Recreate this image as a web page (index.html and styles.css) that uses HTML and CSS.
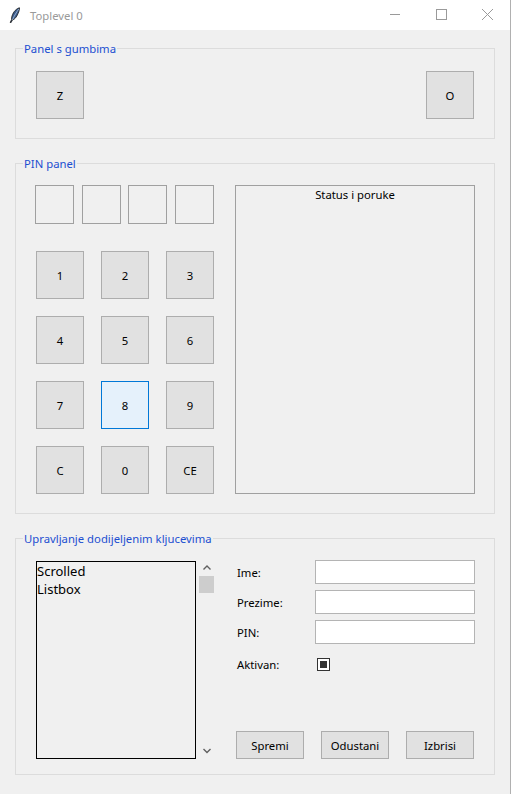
FILE: index.html
```html
<!DOCTYPE html>
<html>
<head>
<meta charset="utf-8">
<link rel="stylesheet" href="styles.css">
</head>
<body>
<div class="window">
  <div class="titlebar">
    <svg class="app-icon" width="12" height="16" viewBox="0 0 12 16">
      <path d="M10.5 0.8 C7.5 1.5 4.5 4.5 3 9 C2.6 10.4 2.4 11.6 2.6 12.6 L1.2 15.4 L2 15.7 L3.4 13 C5.6 12.6 7.6 10 9 6.6 C9.9 4.5 10.6 2.6 10.5 0.8 Z" fill="#3a5a8a" stroke="#1a1a1a" stroke-width="0.8"/>
      <path d="M9.8 2 C7.6 5 5.4 8.6 3.4 13" stroke="#cfe0f5" stroke-width="0.6" fill="none"/>
    </svg>
    <span class="title">Toplevel 0</span>
    <div class="controls">
      <svg class="ctl" width="46" height="30" viewBox="0 0 46 30"><path d="M18 14.5 H28" stroke="#9a9a9a" stroke-width="1"/></svg>
      <svg class="ctl" width="46" height="30" viewBox="0 0 46 30"><rect x="18.5" y="9.5" width="10" height="10" fill="none" stroke="#9a9a9a" stroke-width="1"/></svg>
      <svg class="ctl" width="46" height="30" viewBox="0 0 46 30"><path d="M18 9 L29 20 M29 9 L18 20" stroke="#9a9a9a" stroke-width="1"/></svg>
    </div>
  </div>

  <div class="group g1">
    <div class="legend">Panel s gumbima</div>
    <div class="g1-row">
      <button class="key">Z</button>
      <button class="key">O</button>
    </div>
  </div>

  <div class="group g2">
    <div class="legend">PIN panel</div>
    <div class="g2-body">
      <div class="pin-col">
        <div class="pin-entries">
          <div class="pin-entry"></div>
          <div class="pin-entry"></div>
          <div class="pin-entry"></div>
          <div class="pin-entry"></div>
        </div>
        <div class="keypad">
          <button class="key">1</button>
          <button class="key">2</button>
          <button class="key">3</button>
          <button class="key">4</button>
          <button class="key">5</button>
          <button class="key">6</button>
          <button class="key">7</button>
          <button class="key active">8</button>
          <button class="key">9</button>
          <button class="key">C</button>
          <button class="key">0</button>
          <button class="key">CE</button>
        </div>
      </div>
      <div class="status">Status i poruke</div>
    </div>
  </div>

  <div class="group g3">
    <div class="legend">Upravljanje dodijeljenim kljucevima</div>
    <div class="g3-body">
      <div class="listbox">
        <div class="item">Scrolled</div>
        <div class="item">Listbox</div>
      </div>
      <div class="scrollbar">
        <svg width="18" height="12" viewBox="0 0 18 12"><path d="M5.5 7.5 L9 4 L12.5 7.5" fill="none" stroke="#606060" stroke-width="1.4"/></svg>
        <div class="thumb"></div>
        <div class="sb-spacer"></div>
        <svg width="18" height="12" viewBox="0 0 18 12"><path d="M5.5 4 L9 7.5 L12.5 4" fill="none" stroke="#606060" stroke-width="1.4"/></svg>
      </div>
      <div class="form">
        <div class="frow"><span class="flabel">Ime:</span><div class="fentry"></div></div>
        <div class="frow"><span class="flabel">Prezime:</span><div class="fentry"></div></div>
        <div class="frow"><span class="flabel">PIN:</span><div class="fentry"></div></div>
        <div class="frow check-row"><span class="flabel">Aktivan:</span><div class="checkbox"><div class="check-fill"></div></div></div>
        <div class="actions">
          <button class="btn">Spremi</button>
          <button class="btn">Odustani</button>
          <button class="btn">Izbrisi</button>
        </div>
      </div>
    </div>
  </div>
</div>
</body>
</html>
```

FILE: styles.css
```css
* { box-sizing: border-box; }
html, body {
  margin: 0;
  padding: 0;
  background: #f0f0f0;
}
body {
  font-family: "Noto Sans", "Open Sans", sans-serif;
  font-size: 11.3px;
  color: #000;
}
.window {
  width: 511px;
  height: 794px;
  background: #f0f0f0;
  overflow: hidden;
  border-right: 1px solid #b0b0b0;
}
.titlebar {
  height: 30px;
  background: #fff;
  display: flex;
  align-items: center;
}
.app-icon {
  margin-left: 9px;
  margin-right: 9px;
}
.title {
  color: #9a9a9a;
  font-size: 11.3px;
  flex: 1;
}
.controls {
  display: flex;
  height: 30px;
}
.ctl { display: block; }

.group {
  border: 1px solid #dcdcdc;
  margin: 0 15px 0 15px;
}
.legend {
  display: table;
  margin: -8px 0 0 7px;
  padding: 0 1px;
  height: 16px;
  line-height: 16px;
  background: #f0f0f0;
  color: #1c4fd0;
  font-size: 11.3px;
}
.key {
  width: 48px;
  height: 48px;
  padding: 0;
  margin: 0;
  background: #e1e1e1;
  border: 1px solid #adadad;
  font-family: inherit;
  font-size: 11.3px;
  color: #000;
  display: flex;
  align-items: center;
  justify-content: center;
}
.key.active {
  background: #e5f1fb;
  border-color: #0078d7;
}

.g1 { margin-top: 18px; }
.g1-row {
  display: flex;
  justify-content: space-between;
  padding: 14px 20px 19px 20px;
}

.g2 { margin-top: 24px; }
.g2-body {
  display: flex;
  padding: 13px 19px 19px 19px;
  gap: 21px;
}
.pin-col {
  width: 179px;
  display: flex;
  flex-direction: column;
}
.pin-entries {
  display: flex;
  justify-content: space-between;
}
.pin-entry {
  width: 39px;
  height: 39px;
  border: 1px solid #a0a0a0;
  background: #f0f0f0;
}
.keypad {
  margin-top: 27px;
  margin-left: 1px;
  display: grid;
  grid-template-columns: repeat(3, 48px);
  grid-auto-rows: 48px;
  column-gap: 17px;
  row-gap: 17px;
}
.status {
  width: 240px;
  height: 309px;
  border: 1px solid #a0a0a0;
  text-align: center;
  line-height: 16px;
  padding-top: 1px;
}

.g3 { margin-top: 24px; }
.g3-body {
  display: flex;
  padding: 13px 19px 15px 20px;
}
.listbox {
  width: 160px;
  height: 198px;
  margin-top: 1px;
  border: 1px solid #000;
  background: #f0f0f0;
  font-size: 13px;
  line-height: 18px;
  padding: 0;
}
.scrollbar {
  width: 18px;
  margin-left: 2px;
  margin-top: 1px;
  height: 198px;
  display: flex;
  flex-direction: column;
}
.scrollbar svg { display: block; margin-top: 1px; }
.thumb {
  width: 15px;
  height: 17px;
  margin-left: 1px;
  margin-top: 2px;
  background: #cdcdcd;
}
.sb-spacer { flex: 1; }
.scrollbar svg:last-child { margin-bottom: 2px; }

.form {
  flex: 1;
  margin-left: 20px;
  height: 199px;
  display: flex;
  flex-direction: column;
}
.frow {
  display: flex;
  align-items: center;
  height: 24px;
  margin-bottom: 6px;
}
.flabel {
  width: 79px;
  flex: none;
  padding-left: 1px;
}
.fentry {
  width: 160px;
  height: 24px;
  background: #fff;
  border: 1px solid #b4b4b4;
}
.check-row {
  height: 13px;
  margin-top: 8px;
}
.checkbox {
  width: 13px;
  height: 13px;
  margin-left: 2px;
  border: 1px solid #333;
  background: #fff;
  padding: 2px;
}
.check-fill {
  width: 7px;
  height: 7px;
  background: #333;
}
.actions {
  margin-top: auto;
  display: flex;
  gap: 17px;
}
.btn {
  width: 68px;
  height: 28px;
  padding: 0;
  margin: 0;
  background: #e1e1e1;
  border: 1px solid #adadad;
  font-family: inherit;
  font-size: 11.3px;
  color: #000;
}
```
